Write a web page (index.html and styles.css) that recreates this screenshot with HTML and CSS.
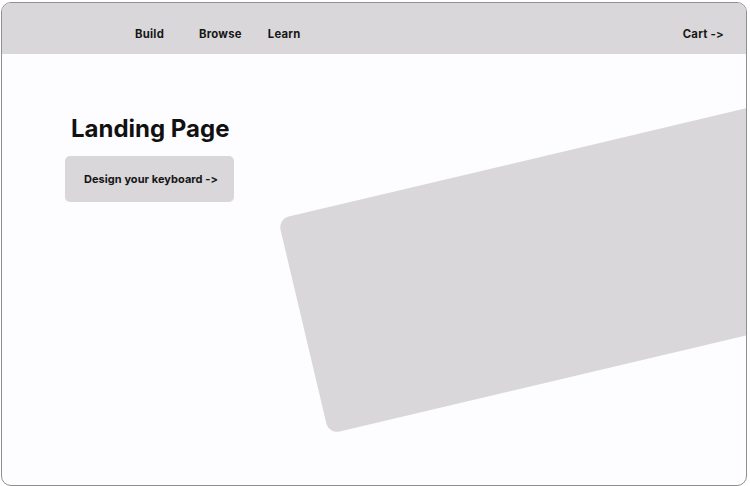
FILE: index.html
```html
<!DOCTYPE html>
<html>
<head>
<meta charset="utf-8">
<link rel="stylesheet" href="styles.css">
</head>
<body>
<div class="frame">
  <header class="topbar">
    <nav class="nav">
      <a class="nav-link build">Build</a>
      <a class="nav-link browse">Browse</a>
      <a class="nav-link">Learn</a>
    </nav>
    <a class="nav-link">Cart -&gt;</a>
  </header>
  <main class="hero">
    <h1 class="title">Landing Page</h1>
    <button class="cta">Design your keyboard -&gt;</button>
    <div class="keyboard"></div>
  </main>
</div>
</body>
</html>
```
FILE: styles.css
```css
html, body {
  margin: 0;
  padding: 0;
  background: #ffffff;
}
body {
  font-family: Inter, "Noto Sans", sans-serif;
  font-variant-ligatures: none;
  font-feature-settings: "calt" 0, "liga" 0;
  color: #161616;
}
.frame {
  position: relative;
  box-sizing: border-box;
  width: 746px;
  height: 484px;
  margin: 2px 0 0 1px;
  border: 1px solid #8f8f8f;
  border-radius: 10px;
  overflow: hidden;
  background: #fdfcfe;
}
.topbar {
  box-sizing: border-box;
  height: 51px;
  padding: 10px 22px 0 133px;
  display: flex;
  align-items: center;
  justify-content: space-between;
  background: #d9d7d9;
}
.nav {
  display: flex;
}
.nav-link {
  font-size: 11.3px;
  font-weight: 700;
  letter-spacing: 0.25px;
  color: #161616;
}
.build { margin-right: 35px; }
.browse { margin-right: 26px; }
.hero {
  padding: 62px 0 0 63px;
}
.title {
  margin: 0 0 14px 6px;
  font-size: 24px;
  font-weight: 700;
  line-height: 26px;
  color: #111;
}
.cta {
  box-sizing: border-box;
  width: 169px;
  height: 46px;
  padding: 0 0 0 19px;
  text-align: left;
  border: none;
  border-radius: 5px;
  background: #d9d7d9;
  font-family: inherit;
  font-variant-ligatures: none;
  font-feature-settings: "calt" 0, "liga" 0;
  font-size: 11px;
  font-weight: 700;
  letter-spacing: 0.05px;
  color: #161616;
}
.keyboard {
  position: absolute;
  left: 276px;
  top: 216px;
  width: 620px;
  height: 221px;
  border-radius: 11px;
  background: #d9d7d9;
  transform-origin: 0 0;
  transform: rotate(-13.3deg);
}
```
